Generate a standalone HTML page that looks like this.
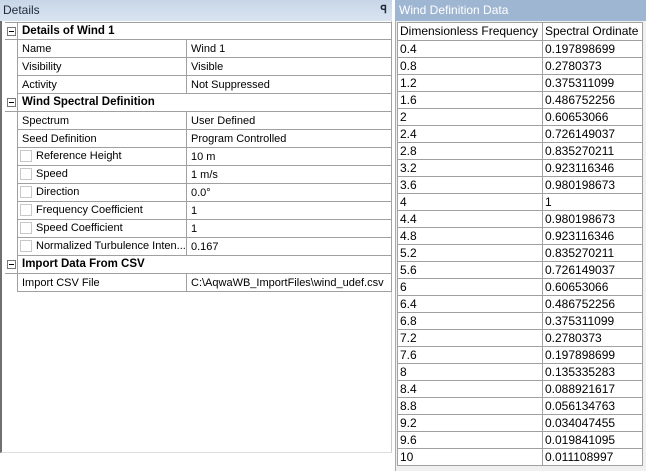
<!DOCTYPE html>
<html><head><style>
*{margin:0;padding:0;box-sizing:border-box}
body{width:646px;height:471px;background:#fff;position:relative;overflow:hidden;font-family:"Liberation Sans",Arial,sans-serif;font-size:11px;color:#000}
#lt{position:absolute;left:0;top:0;width:392px;height:21px;background:linear-gradient(#c7d6e7,#d9e4f0);font-size:12px;padding:3px 0 0 3px;color:#1e2a3a}
#pin{position:absolute;right:5px;top:3px;font-weight:bold;font-size:11px}
#lp{position:absolute;left:0;top:21px;width:392px;height:432px;border-left:2px solid #707070;border-bottom:1px solid #ddd;border-right:1px solid #ccc}
#grid{position:absolute;left:3px;top:1px;width:387px}
.r{height:18px;position:relative;border-bottom:1px solid #a0a0a0}
.r .g{position:absolute;left:0;top:0;width:12px;height:18px;background:#fff}
.r .n{position:absolute;left:12px;top:0;width:170px;height:18px;border-left:1px solid #a0a0a0;border-right:1px solid #a0a0a0;padding:3px 0 0 4px;white-space:nowrap}
.r .v{position:absolute;left:182px;top:0;width:205px;height:18px;border-right:1px solid #a0a0a0;padding:3px 0 0 4px;white-space:nowrap}
.h{height:18px;position:relative;border-bottom:1px solid #a0a0a0;border-right:1px solid #a0a0a0}
.h .t{position:absolute;left:12px;top:0;right:0;height:18px;border-left:1px solid #a0a0a0;padding:2px 0 0 4px;font-weight:bold;font-size:11.5px}
.h .b{position:absolute;left:2px;top:4px;width:9px;height:9px;border:1px solid #777;background:#fff}
.h .b:after{content:"";position:absolute;left:1px;top:3px;width:5px;height:1px;background:#000}
.cb{display:inline-block;width:12px;height:12px;border:1px solid #c8c8c8;vertical-align:-3px;margin-right:4px}
.r .n.c{padding:2px 0 0 2px}
.first{border-top:1px solid #a0a0a0}
#rt{position:absolute;left:395px;top:0;width:251px;height:21px;background:#9eb6d2;color:#fff;font-size:12px;padding:3px 0 0 4px}
#rp{position:absolute;left:395px;top:21px;width:251px;height:450px;background:#f0f0f0;border-left:1px solid #aaa}
table{position:absolute;left:1px;top:1px;border-collapse:collapse;font-size:12px;background:#fff}
tr{height:17px}
tr:first-child{height:18px}
td{border:1px solid #a0a0a0;padding:0 0 0 2px;white-space:nowrap;line-height:13px;font-size:12px}
td.a{width:145px}td.c{width:100px}
</style></head><body>
<div id="lt">Details<span id="pin">ꟼ</span></div>
<div id="lp"><div id="grid">
<div class="h first"><span class="b"></span><div class="t">Details of Wind 1</div></div>
<div class="r"><div class="g"></div><div class="n">Name</div><div class="v">Wind 1</div></div>
<div class="r"><div class="g"></div><div class="n">Visibility</div><div class="v">Visible</div></div>
<div class="r"><div class="g"></div><div class="n">Activity</div><div class="v">Not Suppressed</div></div>
<div class="h"><span class="b"></span><div class="t">Wind Spectral Definition</div></div>
<div class="r"><div class="g"></div><div class="n">Spectrum</div><div class="v">User Defined</div></div>
<div class="r"><div class="g"></div><div class="n">Seed Definition</div><div class="v">Program Controlled</div></div>
<div class="r"><div class="g"></div><div class="n c"><span class="cb"></span>Reference Height</div><div class="v">10 m</div></div>
<div class="r"><div class="g"></div><div class="n c"><span class="cb"></span>Speed</div><div class="v">1 m/s</div></div>
<div class="r"><div class="g"></div><div class="n c"><span class="cb"></span>Direction</div><div class="v">0.0°</div></div>
<div class="r"><div class="g"></div><div class="n c"><span class="cb"></span>Frequency Coefficient</div><div class="v">1</div></div>
<div class="r"><div class="g"></div><div class="n c"><span class="cb"></span>Speed Coefficient</div><div class="v">1</div></div>
<div class="r"><div class="g"></div><div class="n c"><span class="cb"></span>Normalized Turbulence Inten...</div><div class="v">0.167</div></div>
<div class="h"><span class="b"></span><div class="t">Import Data From CSV</div></div>
<div class="r"><div class="g"></div><div class="n">Import CSV File</div><div class="v">C:\AqwaWB_ImportFiles\wind_udef.csv</div></div>
</div></div>
<div id="rt">Wind Definition Data</div>
<div id="rp"><table>
<tr><td class="a">Dimensionless Frequency</td><td class="c">Spectral Ordinate</td></tr>
<tr><td>0.4</td><td>0.197898699</td></tr>
<tr><td>0.8</td><td>0.2780373</td></tr>
<tr><td>1.2</td><td>0.375311099</td></tr>
<tr><td>1.6</td><td>0.486752256</td></tr>
<tr><td>2</td><td>0.60653066</td></tr>
<tr><td>2.4</td><td>0.726149037</td></tr>
<tr><td>2.8</td><td>0.835270211</td></tr>
<tr><td>3.2</td><td>0.923116346</td></tr>
<tr><td>3.6</td><td>0.980198673</td></tr>
<tr><td>4</td><td>1</td></tr>
<tr><td>4.4</td><td>0.980198673</td></tr>
<tr><td>4.8</td><td>0.923116346</td></tr>
<tr><td>5.2</td><td>0.835270211</td></tr>
<tr><td>5.6</td><td>0.726149037</td></tr>
<tr><td>6</td><td>0.60653066</td></tr>
<tr><td>6.4</td><td>0.486752256</td></tr>
<tr><td>6.8</td><td>0.375311099</td></tr>
<tr><td>7.2</td><td>0.2780373</td></tr>
<tr><td>7.6</td><td>0.197898699</td></tr>
<tr><td>8</td><td>0.135335283</td></tr>
<tr><td>8.4</td><td>0.088921617</td></tr>
<tr><td>8.8</td><td>0.056134763</td></tr>
<tr><td>9.2</td><td>0.034047455</td></tr>
<tr><td>9.6</td><td>0.019841095</td></tr>
<tr><td>10</td><td>0.011108997</td></tr>
</table></div>
</body></html>
